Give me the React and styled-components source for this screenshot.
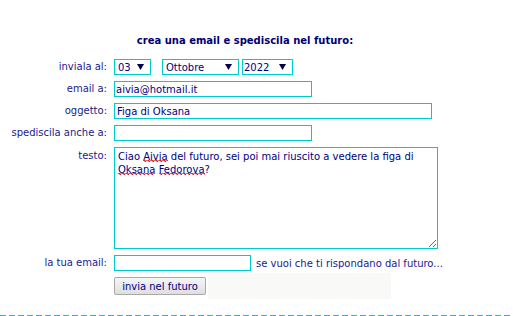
import React from "react";
import styled, { createGlobalStyle } from "styled-components";

const Global = createGlobalStyle`
  html, body { margin: 0; padding: 0; background: #ffffff; }
  body { font-family: "DejaVu Sans", Verdana, sans-serif; font-size: 10px; color: #000080; }
  * { box-sizing: border-box; }
`;

const Page = styled.div`
  width: 513px;
  height: 316px;
  padding-top: 35px;
  display: flex;
  flex-direction: column;
`;

const Title = styled.h1`
  margin: 0;
  width: 490px;
  text-align: center;
  font-size: 10px;
  line-height: 12px;
  font-weight: bold;
  color: #000070;
`;

const Form = styled.form`
  margin-top: 12px;
  display: flex;
  flex-direction: column;
`;

const Row = styled.div`
  display: grid;
  grid-template-columns: 107px auto;
  column-gap: 7px;
  align-items: ${(p) => (p.$top ? "start" : "center")};
  margin-top: ${(p) => p.$mt ?? 6}px;
`;

const Label = styled.label`
  text-align: right;
  white-space: nowrap;
  line-height: 12px;
  color: #1a1a8c;
  padding-top: ${(p) => (p.$top ? 3 : 0)}px;
`;

const Field = styled.div`
  display: flex;
  align-items: center;
`;

const TextInput = styled.input`
  width: ${(p) => p.$w}px;
  height: 16px;
  border: 1px solid #00cccc;
  padding: 0 ${(p) => p.$pl ?? 1}px;
  margin: 0;
  font-family: "DejaVu Sans", Verdana, sans-serif;
  font-size: 10px;
  color: #000080;
  background: #fff;
  outline: none;
`;

const SelectWrap = styled.div`
  position: relative;
  width: ${(p) => p.$w}px;
  height: 16px;
  margin-right: ${(p) => p.$mr ?? 0}px;
`;

const Select = styled.select`
  appearance: none;
  -webkit-appearance: none;
  width: 100%;
  height: 16px;
  border: 1px solid #00cccc;
  border-radius: 0;
  padding: 0 0 0 ${(p) => p.$pl ?? 3}px;
  margin: 0;
  font-family: "DejaVu Sans", Verdana, sans-serif;
  font-size: 10px;
  color: #000080;
  background: #fff;
  outline: none;
`;

const Arrow = styled.svg`
  position: absolute;
  right: 7px;
  top: 5px;
  pointer-events: none;
`;

const TextBox = styled.div`
  width: 324px;
  height: 102px;
  border: 1px solid #00cccc;
  padding: 2px 3px;
  line-height: 13px;
  color: #000080;
  overflow: auto;
  resize: both;
  background: #fff;
`;

const Misspelt = styled.span`
  background-image:
    linear-gradient(45deg, transparent 65%, #e02020 80%, transparent 90%),
    linear-gradient(135deg, transparent 5%, #e02020 15%, transparent 25%),
    linear-gradient(135deg, transparent 45%, #e02020 55%, transparent 65%),
    linear-gradient(45deg, transparent 35%, #e02020 50%, transparent 65%);
  background-size: 4px 2px;
  background-repeat: repeat-x;
  background-position: left bottom;
`;

const Hint = styled.span`
  margin-left: 5px;
  color: #1a1a8c;
  white-space: nowrap;
`;

const ButtonRow = styled.div`
  display: flex;
  align-items: center;
  height: 26px;
`;

const Button = styled.button`
  width: 92px;
  height: 18px;
  padding: 0;
  margin: 0;
  border: 1px solid #a9a9a9;
  border-radius: 2px;
  background: linear-gradient(#f6f6f6, #dedede);
  font-family: "DejaVu Sans", Verdana, sans-serif;
  font-size: 10px;
  color: #000080;
`;

const Slot = styled.div`
  width: 183px;
  height: 26px;
  margin-left: 2px;
  background: #f9f9f7;
`;

const Divider = styled.div`
  margin-top: auto;
  height: 1px;
  width: 100%;
  background: repeating-linear-gradient(90deg, #00cccc 0 6px, transparent 6px 9px);
`;

const Tri = () => (
  <Arrow width="7" height="6" viewBox="0 0 7 6">
    <polygon points="0,0 7,0 3.5,6" fill="#000050" />
  </Arrow>
);

export default function App() {
  return (
    <>
      <Global />
      <Page>
        <Title>crea una email e spediscila nel futuro:</Title>
        <Form onSubmit={(e) => e.preventDefault()}>
          <Row $mt={0}>
            <Label>inviala al:</Label>
            <Field>
              <SelectWrap $w={37} $mr={11}>
                <Select defaultValue="03">
                  <option>03</option>
                </Select>
                <Tri />
              </SelectWrap>
              <SelectWrap $w={77} $mr={3}>
                <Select defaultValue="Ottobre">
                  <option>Ottobre</option>
                </Select>
                <Tri />
              </SelectWrap>
              <SelectWrap $w={51}>
                <Select defaultValue="2022" $pl={1}>
                  <option>2022</option>
                </Select>
                <Tri />
              </SelectWrap>
            </Field>
          </Row>
          <Row>
            <Label>email a:</Label>
            <Field>
              <TextInput $w={198} defaultValue="aivia@hotmail.it" />
            </Field>
          </Row>
          <Row>
            <Label>oggetto:</Label>
            <Field>
              <TextInput $w={318} $pl={2} defaultValue="Figa di Oksana" />
            </Field>
          </Row>
          <Row>
            <Label>spediscila anche a:</Label>
            <Field>
              <TextInput $w={198} defaultValue="" />
            </Field>
          </Row>
          <Row $top>
            <Label $top>testo:</Label>
            <Field>
              <TextBox>
                Ciao <Misspelt>Aivia</Misspelt> del futuro, sei poi mai riuscito a vedere la figa di{" "}
                <Misspelt>Oksana</Misspelt> <Misspelt>Fedorova</Misspelt>?
              </TextBox>
            </Field>
          </Row>
          <Row>
            <Label>la tua email:</Label>
            <Field>
              <TextInput $w={137} defaultValue="" />
              <Hint>se vuoi che ti rispondano dal futuro...</Hint>
            </Field>
          </Row>
          <Row $mt={2}>
            <span />
            <ButtonRow>
              <Button type="submit">invia nel futuro</Button>
              <Slot />
            </ButtonRow>
          </Row>
        </Form>
        <Divider />
      </Page>
    </>
  );
}
